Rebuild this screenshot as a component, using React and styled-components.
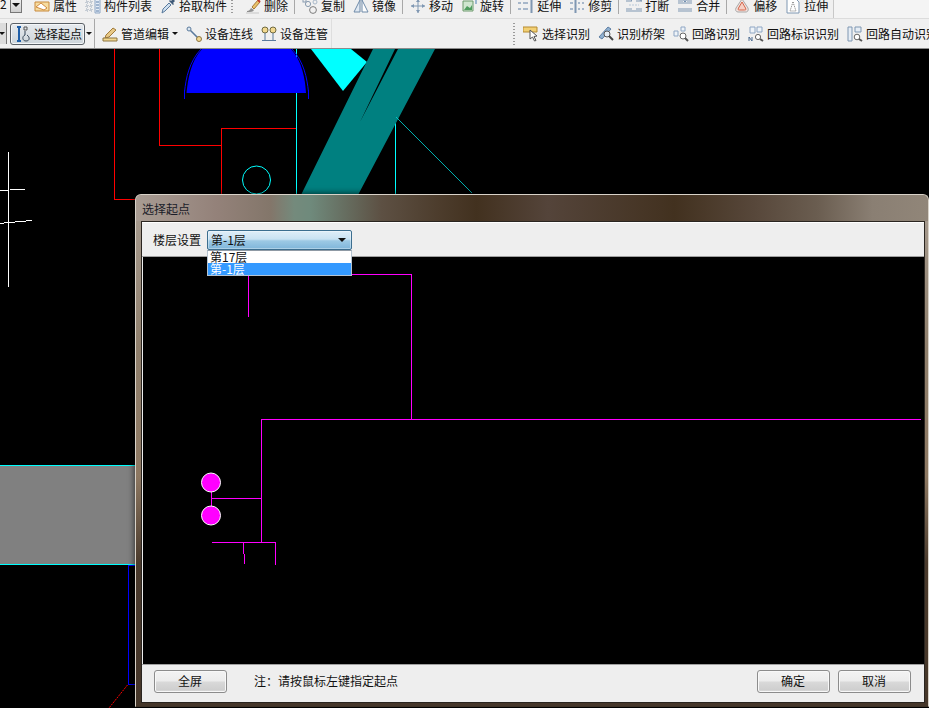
import React from "react";
import styled, { createGlobalStyle } from "styled-components";

const GlobalStyle = createGlobalStyle`
  html, body { margin: 0; padding: 0; background: #000; }
  body { font-family: "Noto Sans CJK SC", "Liberation Sans", sans-serif; font-size: 12px; color: #111; }
`;

const Svg = ({ children }) => (
  <svg width="16" height="16" viewBox="0 0 16 16" fill="none">
    {children}
  </svg>
);

const AttrIcon = () => (
  <Svg>
    <path d="M1 4h14v9H1z" fill="#f6dca0" stroke="#c98a3c" />
    <path d="M2 9l5-4 6 5-3 2z" fill="#fff" stroke="#d08a40" />
  </Svg>
);
const ListIcon = () => (
  <Svg>
    <path d="M10 1h5v14h-5z" fill="#e4ecf6" stroke="#8ea6c4" />
    <path d="M11 4h3M11 7h3M11 10h3M11 13h3" stroke="#5d7fa8" />
    <path d="M1 3h2v2H1zM5 3h2v2H5zM1 7h2v2H1zM5 7h2v2H5zM1 11h2v2H1zM5 11h2v2H5z" stroke="#9aa8b8" strokeDasharray="1 1" />
  </Svg>
);
const PickIcon = () => (
  <Svg>
    <path d="M2 15l1-4 6-6 2 2-6 6z" fill="#cfe0f0" stroke="#5a7a9c" />
    <path d="M9 3l1-1 1 1 2-2 2 2-2 2 1 1-1 1z" fill="#3f5a78" />
  </Svg>
);
const DeleteIcon = () => (
  <Svg>
    <path d="M7 9l6-7 2 2-6 7z" fill="#e9c46a" stroke="#a8763a" />
    <path d="M13 2l2 2" stroke="#c0392b" strokeWidth="2" />
    <path d="M2 13c2 0 3-1 4-3l3 2c-1 2-3 2-7 2z" fill="#8f8f8f" />
    <path d="M1 15h13" stroke="#c6c6c6" />
  </Svg>
);
const CopyIcon = () => (
  <Svg>
    <rect x="1" y="1" width="3" height="3" stroke="#8a9cb0" />
    <circle cx="6" cy="6" r="2.6" stroke="#8a9cb0" />
    <circle cx="11" cy="12" r="3.4" stroke="#7d7d7d" />
    <circle cx="13" cy="4" r="2" stroke="#a8b8c8" />
  </Svg>
);
const MirrorIcon = () => (
  <Svg>
    <path d="M7 2L1 14h6z" fill="#dfe8f2" stroke="#6f8aa8" />
    <path d="M9 2l6 12H9z" fill="#fff" stroke="#6f8aa8" />
  </Svg>
);
const MoveIcon = () => (
  <Svg>
    <path d="M8 1v14M1 8h14" stroke="#7f97b2" />
    <path d="M8 1L6 4h4zM8 15l-2-3h4zM1 8l3-2v4zM15 8l-3-2v4z" fill="#7f97b2" />
  </Svg>
);
const RotateIcon = () => (
  <Svg>
    <path d="M2 3h10v10H2z" fill="#cfe6cf" stroke="#6d9a6d" />
    <path d="M3 12l3-4 3 2 2-3v5z" fill="#4f9d5f" />
    <path d="M10 1h5v5" stroke="#4a80b0" />
  </Svg>
);
const ExtendIcon = () => (
  <Svg>
    <path d="M13.5 1v14" stroke="#7f97b2" strokeWidth="2" />
    <path d="M0 5h3M5 5h5M0 11h3M5 11h5" stroke="#5f7fa4" />
  </Svg>
);
const TrimIcon = () => (
  <Svg>
    <path d="M6.5 1v14" stroke="#7f97b2" strokeWidth="2" />
    <path d="M1 5h3M9 5h2M13 5h2M1 11h3M9 11h2M13 11h2" stroke="#5f7fa4" />
  </Svg>
);
const BreakIcon = () => (
  <Svg>
    <path d="M0 3h6l-2-2M10 3h6l-4-2M0 11h6M10 11h6M0 13h16" stroke="#7f97b2" />
    <path d="M3 7h10" stroke="#b8c8d8" strokeDasharray="2 1" />
  </Svg>
);
const MergeIcon = () => (
  <Svg>
    <path d="M1 3h5M10 3h5M1 5h14M1 11h14M1 13h14" stroke="#7f97b2" />
    <path d="M6 1l2 3 2-3" stroke="#5f7fa4" />
  </Svg>
);
const OffsetIcon = () => (
  <Svg>
    <path d="M8 1l6 9c1 3-1 4-2 4H4c-2 0-3-2-2-4z" fill="#f4e4e0" stroke="#a8a8a8" />
    <path d="M8 4l3.500 6c1 2 0 2-1 2H5.500c-1 0-2 0-1-2z" fill="#f6cfc4" stroke="#d2654a" />
  </Svg>
);
const StretchIcon = () => (
  <Svg>
    <path d="M2 1h9l3 3v11H2z" fill="#fff" stroke="#7f97b2" />
    <path d="M8 4l3 9H5z" stroke="#777" strokeDasharray="1 1" />
  </Svg>
);
const StartIcon = () => (
  <Svg>
    <path d="M2 1h4M4 1v14M2 15h4" stroke="#1f5fa8" strokeWidth="2" />
    <path d="M9 1h3v3H9z" stroke="#555" />
    <path d="M10 5v4c-3 1-3 6 1 6s4-4 1-6" stroke="#345" />
  </Svg>
);
const PipeEditIcon = () => (
  <Svg>
    <path d="M4 9l7-7 3 2-7 7-4 1z" fill="#e8c987" stroke="#a07a3a" />
    <path d="M1 12h14v3H1z" fill="#f2d88f" stroke="#8c7440" />
  </Svg>
);
const DeviceLineIcon = () => (
  <Svg>
    <circle cx="3" cy="3" r="2" fill="#dbe6f0" stroke="#5a7a9c" />
    <path d="M4.500 4.500l7 7" stroke="#5a7a9c" strokeWidth="1.600" />
    <circle cx="13" cy="13" r="2.500" fill="#f2d88f" stroke="#8c7440" />
  </Svg>
);
const DevicePipeIcon = () => (
  <Svg>
    <circle cx="4" cy="4" r="3" fill="#f2d88f" stroke="#6f6a40" />
    <circle cx="12" cy="4" r="3" fill="#f2d88f" stroke="#6f6a40" />
    <path d="M4 7v7M12 7v7M1 14.500h14" stroke="#5a7a9c" />
  </Svg>
);
const SelectRecogIcon = () => (
  <Svg>
    <path d="M0 1h14v5H0z" fill="#f2d074" stroke="#b58a30" />
    <path d="M7 4l7 6-3 .5 2 4-1.500.5-2-4-2.500 2z" fill="#fff" stroke="#555" />
  </Svg>
);
const BridgeIcon = () => (
  <Svg>
    <path d="M1 11L10 1l3 2-9 10z" fill="#8fb0d0" stroke="#5f7fa4" />
    <circle cx="9" cy="8" r="3" fill="#e6eef6" stroke="#555" />
    <path d="M11 10l4 4" stroke="#444" strokeWidth="2" />
  </Svg>
);
const LoopIcon = () => (
  <Svg>
    <path d="M1 5h4v5H1zM8 1h4v4H8z" fill="#eef3f8" stroke="#8ea6c4" />
    <circle cx="10" cy="10" r="3" fill="#fff" stroke="#666" />
    <path d="M12 12l3 3" stroke="#555" strokeWidth="2" />
  </Svg>
);
const LoopLabelIcon = () => (
  <Svg>
    <path d="M2 1h5v6H2zM9 1h5v5H9z" fill="#eef3f8" stroke="#8ea6c4" />
    <path d="M1 15v-4l3 4v-4" stroke="#4a6a90" />
    <circle cx="10" cy="11" r="2.600" fill="#fff" stroke="#666" />
    <path d="M12 13l3 2" stroke="#555" strokeWidth="2" />
  </Svg>
);
const LoopAutoIcon = () => (
  <Svg>
    <path d="M1 1h4v14H1zM8 1h6v5H8z" fill="#e6edf5" stroke="#7f97b2" />
    <circle cx="10" cy="11" r="2.800" fill="#fff" stroke="#666" />
    <path d="M12 13l3 2" stroke="#555" strokeWidth="2" />
  </Svg>
);

const Page = styled.div`
  position: relative;
  width: 929px;
  height: 708px;
  overflow: hidden;
  background: #000;
  display: flex;
  flex-direction: column;
`;

const TopBar = styled.div`
  height: 19px;
  flex: none;
  background: #f4f4f4;
  border-bottom: 1px solid #dcdcdc;
  box-sizing: border-box;
  overflow: hidden;
`;

const TopTools = styled.div`
  width: 834px;
  height: 18px;
  box-sizing: border-box;
  background: #f0f0f0;
  border-right: 1px solid #c8c8c8;
  display: flex;
  align-items: flex-end;
  padding-bottom: 4px;
`;

const SecondBar = styled.div`
  height: 30px;
  flex: none;
  box-sizing: border-box;
  background: #f0f0f0;
  border-bottom: 1px solid #8c8c8c;
  display: flex;
  align-items: center;
  overflow: hidden;
`;

const LeftTools = styled.div`
  width: 332px;
  height: 100%;
  flex: none;
  box-sizing: border-box;
  border-right: 1px solid #dedede;
  display: flex;
  align-items: center;
`;

const ClippedCombo = styled.div`
  width: 22px;
  height: 17px;
  flex: none;
  margin-right: 8px;
  display: flex;
  justify-content: flex-end;
  position: relative;
  align-self: flex-end;
  font-size: 12px;
  line-height: 12px;
`;

const ComboValue = styled.span`
  flex: 1;
  padding-top: 1px;
`;

const ComboArrow = styled.span`
  width: 12px;
  height: 16px;
  box-sizing: border-box;
  border: 1px solid #777;
  background: linear-gradient(#f4f4f4, #cfcfcf);
  display: flex;
  align-items: center;
  justify-content: center;
`;

const Caret = styled.i`
  display: block;
  flex: none;
  width: 0;
  height: 0;
  border-left: ${(p) => p.$size || 3}px solid transparent;
  border-right: ${(p) => p.$size || 3}px solid transparent;
  border-top: ${(p) => p.$size || 3}px solid #111;
`;

const SmallArrow = styled.div`
  width: 7px;
  height: 21px;
  flex: none;
  margin-right: 3px;
  background: #dcdcdc;
  border-right: 1px solid #777;
  box-sizing: content-box;
  margin-left: -1px;
  display: flex;
  align-items: center;
`;

const ActiveTool = styled.div`
  width: 75px;
  height: 22px;
  flex: none;
  box-sizing: border-box;
  border: 1px solid #5a6066;
  border-radius: 3px;
  background: linear-gradient(#e6eaee, #cdd5da);
  box-shadow: inset 0 0 0 1px #f4f6f8;
  padding-left: 4px;
  display: flex;
  align-items: center;
  gap: 3px;
`;

const ArrowSlot = styled.div`
  width: 8px;
  flex: none;
  display: flex;
  justify-content: center;
`;

const Tool = styled.div`
  flex: none;
  display: flex;
  align-items: center;
  gap: 3px;
  height: 16px;
  padding: ${(p) => (p.$caret ? "0 0 0 4px" : "0 4px")};
  line-height: 16px;
  white-space: nowrap;
`;

const CaretSlot = styled.span`
  margin: 0 4px 0 0;
  display: flex;
`;

const Sep = styled.div`
  flex: none;
  align-self: stretch;
  width: 1px;
  margin: ${(p) => p.$margin || "0 3px 0 2px"};
  background: #a8a8a8;
`;

const Grip = styled.div`
  flex: none;
  width: 2px;
  height: ${(p) => p.$height || 24}px;
  margin: ${(p) => p.$margin};
  background-image: radial-gradient(circle, #9a9a9a 0.8px, transparent 1px);
  background-size: 2px 3px;
`;

const Viewport = styled.svg`
  display: block;
  flex: 1;
  width: 929px;
  min-height: 0;
`;

const Dialog = styled.div`
  position: absolute;
  left: 135px;
  top: 194px;
  width: 794px;
  height: 513px;
  box-sizing: border-box;
  border: 1px solid #d8d2c8;
  border-bottom-color: #3e3226;
  border-radius: 6px 6px 0 0;
  padding: 0 3px 3px 5px;
  background: linear-gradient(#a89d92 0, #8f7f6c 30%, #8d7862 55%, #4a3a2c 72%, #46372a 100%);
  box-shadow: 0 0 7px rgba(0, 0, 0, 0.75);
  display: flex;
  flex-direction: column;
`;

const TitleBar = styled.div`
  height: 26px;
  flex: none;
  margin: 0 -3px 0 -5px;
  padding-left: 6px;
  border-radius: 5px 5px 0 0;
  background: linear-gradient(
    90deg,
    #a89c93 0,
    #94827a 10%,
    #83766a 17%,
    #748a7c 20%,
    #6f8a7c 22%,
    #5d5043 31%,
    #4d3d2d 38%,
    #42311f 43%,
    #54443a 52%,
    #42311f 68%,
    #57473a 78%,
    #6a5d50 86%,
    #8a7f73 93%,
    #918679 100%
  );
  display: flex;
  align-items: center;
  color: #1a1c28;
  font-size: 12px;
`;

const Client = styled.div`
  flex: 1;
  min-height: 0;
  border: 1px solid #2a2520;
  background: #eeeeee;
  display: flex;
  flex-direction: column;
`;

const DialogHeader = styled.div`
  height: 35px;
  flex: none;
  box-sizing: border-box;
  padding-left: 11px;
  display: flex;
  align-items: center;
  gap: 6px;
  border-top: 1px solid #fff;
  border-bottom: 1px solid #a0a0a0;
`;

const SelectBox = styled.div`
  position: relative;
  width: 145px;
  height: 20px;
  box-sizing: border-box;
  border: 1px solid #3c6e8f;
  border-radius: 2px;
  padding: 0 5px 0 3px;
  background: linear-gradient(#dfeef8 0, #c9e2f2 45%, #9cc9e5 55%, #7fb6da 100%);
  box-shadow: inset 0 0 0 1px rgba(255, 255, 255, 0.35);
  display: flex;
  align-items: center;
  justify-content: space-between;
`;

const OptionList = styled.div`
  position: absolute;
  left: -1px;
  top: 19px;
  width: 145px;
  height: 26px;
  box-sizing: border-box;
  background: #fff;
  border: 1px solid #b5c3d0;
  border-top-color: #8f9aa5;
`;

const Option = styled.div`
  height: 12px;
  line-height: 12px;
  padding-left: 2px;
  background: ${(p) => (p.$selected ? "#3399ff" : "#fff")};
  color: ${(p) => (p.$selected ? "#fff" : "#111")};
`;

const PreviewCanvas = styled.svg`
  display: block;
  flex: none;
  width: 781px;
  height: 407px;
  margin-left: 1px;
  background: #000;
`;

const DialogFooter = styled.div`
  flex: 1;
  min-height: 0;
  box-sizing: border-box;
  border-top: 1px solid #a0a0a0;
  padding: 5px 13px 0 12px;
  display: flex;
  align-items: flex-start;
`;

const FooterButton = styled.button`
  width: 73px;
  height: 23px;
  flex: none;
  padding: 0 1px 2px 0;
  box-sizing: border-box;
  border: 1px solid #8c8c8c;
  border-radius: 3px;
  font: inherit;
  color: #111;
  background: linear-gradient(#f3f3f3 0, #ececec 48%, #d9d9d9 52%, #cfcfcf 88%, #dcdcdc 100%);
  box-shadow: inset 0 0 0 1px #f8f8f8;
`;

const Note = styled.span`
  margin-left: 27px;
  line-height: 21px;
`;

const FooterActions = styled.div`
  margin-left: auto;
  display: flex;
  gap: 8px;
`;

const topTools = [
  { Icon: AttrIcon, label: "属性" },
  { Icon: ListIcon, label: "构件列表" },
  { Icon: PickIcon, label: "拾取构件" },
  { grip: true },
  { Icon: DeleteIcon, label: "删除" },
  { sep: true },
  { Icon: CopyIcon, label: "复制" },
  { Icon: MirrorIcon, label: "镜像" },
  { sep: true },
  { Icon: MoveIcon, label: "移动" },
  { Icon: RotateIcon, label: "旋转" },
  { sep: true },
  { Icon: ExtendIcon, label: "延伸" },
  { Icon: TrimIcon, label: "修剪" },
  { sep: true },
  { Icon: BreakIcon, label: "打断" },
  { Icon: MergeIcon, label: "合并" },
  { sep: true },
  { Icon: OffsetIcon, label: "偏移" },
  { Icon: StretchIcon, label: "拉伸" },
];

const recognitionTools = [
  { Icon: SelectRecogIcon, label: "选择识别" },
  { Icon: BridgeIcon, label: "识别桥架" },
  { Icon: LoopIcon, label: "回路识别" },
  { Icon: LoopLabelIcon, label: "回路标识识别" },
  { Icon: LoopAutoIcon, label: "回路自动识别" },
];

function ToolButton({ Icon, label }) {
  return (
    <Tool>
      <Icon />
      {label}
    </Tool>
  );
}

function MainDrawing() {
  return (
    <Viewport viewBox="0 49 929 659">
      <path d="M0 465h135v99H0z" fill="#808080" />
      <g fill="none" shapeRendering="crispEdges">
        <path d="M0 465.500h135M0 564.500h135" stroke="#00ffff" />
        <path d="M114.500 49v150.500H135" stroke="#ff0000" />
        <path d="M159.500 49v96.500h62M221.500 195V128.500h75" stroke="#ff0000" />
        <path d="M296.500 49v146M395.500 118v77" stroke="#00ffff" />
        <path d="M128.500 565v119.500H135M128 565.500h7" stroke="#0000ff" />
        <path d="M8.500 152v135" stroke="#ffffff" />
        <path d="M0 190.500h9M10 189.500h15M0 223.500h4M4 222.500h11M15 221.500h11M26 220.500h6" stroke="#ffffff" />
        <path d="M184.500 90v9M308.500 90v9" stroke="#0000ff" />
      </g>
      <path d="M186.500 93C188 78 191 61 202 49h89c11 12 14 29 15 44z" fill="#0000ff" />
      <path d="M184.500 92C186 78 189 62 201 49M308.500 92C307 78 304 62 292 49" stroke="#0000ff" fill="none" />
      <path d="M311 49l32 42 24-29-16-13z" fill="#00ffff" />
      <path d="M373 49L301 195h57L435 49h-37L360 122l35-73z" fill="#008080" />
      <circle cx="256.500" cy="180" r="14" fill="none" stroke="#00ffff" />
      <path d="M396 117l76 76" stroke="#00dcdc" strokeWidth="0.800" fill="none" />
      <path d="M127.500 685L109 708" stroke="#ff0000" strokeDasharray="2 1" fill="none" />
    </Viewport>
  );
}

function FloorPreview() {
  return (
    <PreviewCanvas viewBox="143 257 781 407">
      <g fill="none" stroke="#ff00ff" shapeRendering="crispEdges">
        <path d="M248.500 317V274.500h163v145M921 419.500H261.500V542.500" />
        <path d="M211.500 492v14M211 498.500h50M212 542.500h63.500V565M243.500 543v11M244.500 554v10" />
      </g>
      <circle cx="211" cy="482.500" r="9.500" fill="#ff00ff" stroke="#ffffff" />
      <circle cx="211" cy="515.500" r="9.500" fill="#ff00ff" stroke="#ffffff" />
    </PreviewCanvas>
  );
}

export default function App() {
  return (
    <Page>
      <GlobalStyle />
      <TopBar>
        <TopTools>
          <ClippedCombo>
            <ComboValue>2</ComboValue>
            <ComboArrow>
              <Caret $size={4} />
            </ComboArrow>
          </ClippedCombo>
          {topTools.map((tool, i) => {
            if (tool.sep) return <Sep key={i} />;
            if (tool.grip) return <Grip key={i} $height={18} $margin="0 8px 0 0" />;
            return <ToolButton key={i} Icon={tool.Icon} label={tool.label} />;
          })}
        </TopTools>
      </TopBar>
      <SecondBar>
        <LeftTools>
          <SmallArrow>
            <Caret />
          </SmallArrow>
          <ActiveTool>
            <StartIcon />
            选择起点
          </ActiveTool>
          <ArrowSlot>
            <Caret />
          </ArrowSlot>
          <Sep $margin="0 3px 0 1px" />
          <Tool $caret>
            <PipeEditIcon />
            管道编辑
            <CaretSlot>
              <Caret />
            </CaretSlot>
          </Tool>
          <ToolButton Icon={DeviceLineIcon} label="设备连线" />
          <ToolButton Icon={DevicePipeIcon} label="设备连管" />
        </LeftTools>
        <Grip $margin="0 4px 0 181px" />
        {recognitionTools.map((tool) => (
          <ToolButton key={tool.label} Icon={tool.Icon} label={tool.label} />
        ))}
      </SecondBar>
      <MainDrawing />
      <Dialog>
        <TitleBar>选择起点</TitleBar>
        <Client>
          <DialogHeader>
            楼层设置
            <SelectBox>
              第-1层
              <Caret $size={4} />
              <OptionList>
                <Option>第17层</Option>
                <Option $selected>第-1层</Option>
              </OptionList>
            </SelectBox>
          </DialogHeader>
          <FloorPreview />
          <DialogFooter>
            <FooterButton>全屏</FooterButton>
            <Note>{"注\uFF1A请按鼠标左键指定起点"}</Note>
            <FooterActions>
              <FooterButton>确定</FooterButton>
              <FooterButton>取消</FooterButton>
            </FooterActions>
          </DialogFooter>
        </Client>
      </Dialog>
    </Page>
  );
}
